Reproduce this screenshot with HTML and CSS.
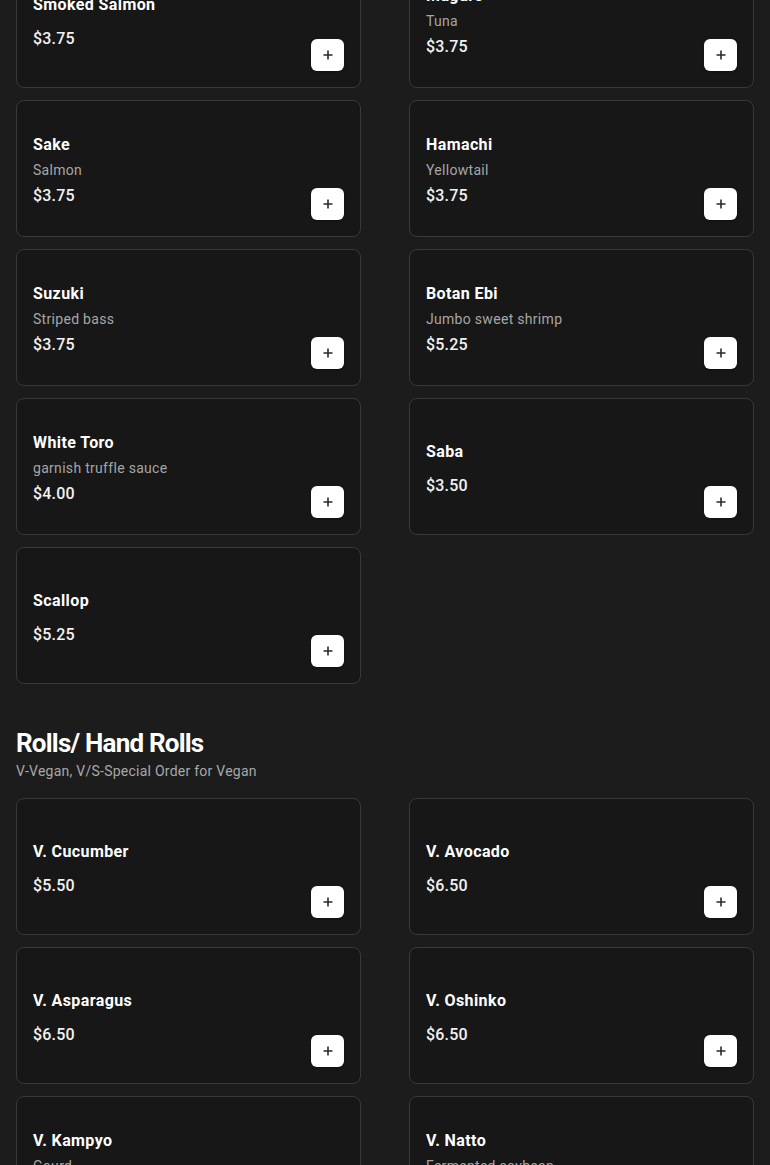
FILE: index.html
```html
<!DOCTYPE html>
<html lang="en">
<head>
<meta charset="utf-8">
<title>Menu</title>
<link rel="stylesheet" href="styles.css">
</head>
<body>
<main class="menu">
  <section class="category">
    <div class="grid">
      <article class="card"><div class="info"><h3 class="title">Smoked Salmon</h3><div class="price">$3.75</div></div><button class="add" aria-label="Add"><svg viewBox="0 0 10 10"><path d="M5 0.5v9M0.5 5h9"/></svg></button></article>
      <article class="card"><div class="info"><h3 class="title">Maguro</h3><p class="desc">Tuna</p><div class="price">$3.75</div></div><button class="add" aria-label="Add"><svg viewBox="0 0 10 10"><path d="M5 0.5v9M0.5 5h9"/></svg></button></article>
      <article class="card"><div class="info"><h3 class="title">Sake</h3><p class="desc">Salmon</p><div class="price">$3.75</div></div><button class="add" aria-label="Add"><svg viewBox="0 0 10 10"><path d="M5 0.5v9M0.5 5h9"/></svg></button></article>
      <article class="card"><div class="info"><h3 class="title">Hamachi</h3><p class="desc">Yellowtail</p><div class="price">$3.75</div></div><button class="add" aria-label="Add"><svg viewBox="0 0 10 10"><path d="M5 0.5v9M0.5 5h9"/></svg></button></article>
      <article class="card"><div class="info"><h3 class="title">Suzuki</h3><p class="desc">Striped bass</p><div class="price">$3.75</div></div><button class="add" aria-label="Add"><svg viewBox="0 0 10 10"><path d="M5 0.5v9M0.5 5h9"/></svg></button></article>
      <article class="card"><div class="info"><h3 class="title">Botan Ebi</h3><p class="desc">Jumbo sweet shrimp</p><div class="price">$5.25</div></div><button class="add" aria-label="Add"><svg viewBox="0 0 10 10"><path d="M5 0.5v9M0.5 5h9"/></svg></button></article>
      <article class="card"><div class="info"><h3 class="title">White Toro</h3><p class="desc">garnish truffle sauce</p><div class="price">$4.00</div></div><button class="add" aria-label="Add"><svg viewBox="0 0 10 10"><path d="M5 0.5v9M0.5 5h9"/></svg></button></article>
      <article class="card"><div class="info"><h3 class="title">Saba</h3><div class="price">$3.50</div></div><button class="add" aria-label="Add"><svg viewBox="0 0 10 10"><path d="M5 0.5v9M0.5 5h9"/></svg></button></article>
      <article class="card"><div class="info"><h3 class="title">Scallop</h3><div class="price">$5.25</div></div><button class="add" aria-label="Add"><svg viewBox="0 0 10 10"><path d="M5 0.5v9M0.5 5h9"/></svg></button></article>
    </div>
  </section>
  <section class="category">
    <header class="cat-head">
      <h2 class="cat-title">Rolls/ Hand Rolls</h2>
      <p class="cat-sub">V-Vegan, V/S-Special Order for Vegan</p>
    </header>
    <div class="grid">
      <article class="card"><div class="info"><h3 class="title">V. Cucumber</h3><div class="price">$5.50</div></div><button class="add" aria-label="Add"><svg viewBox="0 0 10 10"><path d="M5 0.5v9M0.5 5h9"/></svg></button></article>
      <article class="card"><div class="info"><h3 class="title">V. Avocado</h3><div class="price">$6.50</div></div><button class="add" aria-label="Add"><svg viewBox="0 0 10 10"><path d="M5 0.5v9M0.5 5h9"/></svg></button></article>
      <article class="card"><div class="info"><h3 class="title">V. Asparagus</h3><div class="price">$6.50</div></div><button class="add" aria-label="Add"><svg viewBox="0 0 10 10"><path d="M5 0.5v9M0.5 5h9"/></svg></button></article>
      <article class="card"><div class="info"><h3 class="title">V. Oshinko</h3><div class="price">$6.50</div></div><button class="add" aria-label="Add"><svg viewBox="0 0 10 10"><path d="M5 0.5v9M0.5 5h9"/></svg></button></article>
      <article class="card"><div class="info"><h3 class="title">V. Kampyo</h3><p class="desc">Gourd</p><div class="price">$6.50</div></div><button class="add" aria-label="Add"><svg viewBox="0 0 10 10"><path d="M5 0.5v9M0.5 5h9"/></svg></button></article>
      <article class="card"><div class="info"><h3 class="title">V. Natto</h3><p class="desc">Fermented soybean</p><div class="price">$6.50</div></div><button class="add" aria-label="Add"><svg viewBox="0 0 10 10"><path d="M5 0.5v9M0.5 5h9"/></svg></button></article>
    </div>
  </section>
</main>
</body>
</html>
```
FILE: styles.css
```css
html, body {
  margin: 0;
  padding: 0;
  background: #1c1c1c;
  color: #fff;
  font-family: Roboto, "Liberation Sans", sans-serif;
}

.menu {
  margin-top: -49px;
  padding: 0 16px;
}

.category + .category {
  margin-top: 43px;
}

.cat-head {
  margin-bottom: 17px;
}

.cat-title {
  margin: 0;
  font-size: 26px;
  line-height: 32px;
  font-weight: 700;
  letter-spacing: -0.8px;
  color: #fff;
}

.cat-sub {
  margin: 2px 0 0;
  font-size: 14px;
  line-height: 20px;
  letter-spacing: 0.25px;
  color: #a8a8a8;
}

.grid {
  display: grid;
  grid-template-columns: 1fr 1fr;
  column-gap: 48px;
  row-gap: 12px;
}

.card {
  box-sizing: border-box;
  height: 137px;
  display: flex;
  align-items: center;
  justify-content: space-between;
  padding: 16px;
  background: #171717;
  border: 1px solid #393939;
  border-radius: 8px;
}

.info {
  display: flex;
  flex-direction: column;
  padding-top: 4px;
}

.title {
  margin: 0;
  font-size: 16px;
  line-height: 24px;
  font-weight: 700;
  letter-spacing: 0.4px;
  color: #fff;
}

.desc {
  margin: 3px 0 0;
  font-size: 14px;
  line-height: 20px;
  letter-spacing: 0.3px;
  color: #a6a6a6;
}

.price {
  margin-top: 4px;
  font-size: 16px;
  line-height: 24px;
  font-weight: 500;
  letter-spacing: 0.2px;
  color: #f2f2f2;
}

.title + .price {
  margin-top: 10px;
}

.add {
  align-self: flex-end;
  flex: none;
  width: 33px;
  height: 32px;
  padding: 0;
  display: flex;
  align-items: center;
  justify-content: center;
  background: #fff;
  border: none;
  border-radius: 6px;
  box-shadow: 0 1px 2px rgba(0, 0, 0, 0.4);
  cursor: pointer;
}

.add svg {
  width: 10px;
  height: 10px;
  fill: none;
  stroke: #2a2a2a;
  stroke-width: 1.6;
}
```
